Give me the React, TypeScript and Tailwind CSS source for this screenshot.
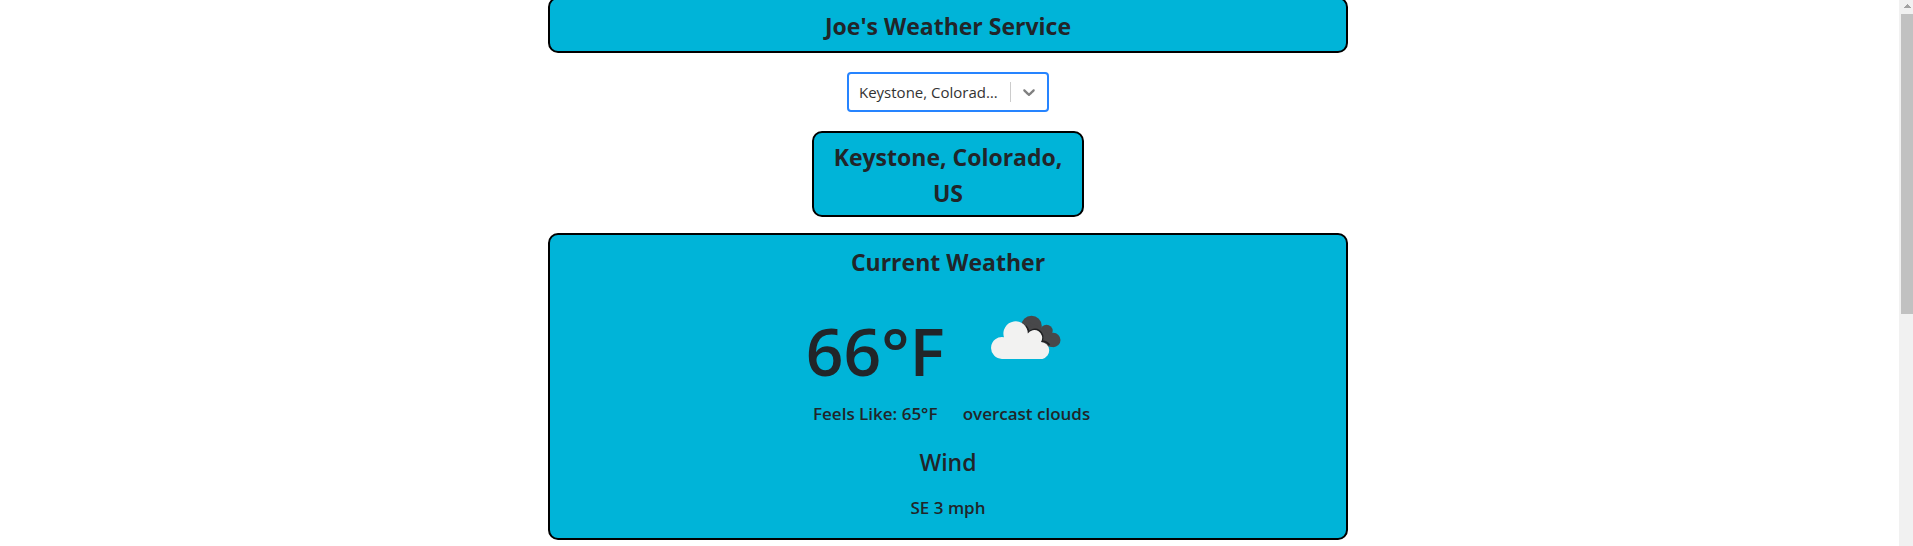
import React, { useState } from "react";

const LOCATIONS = ["Keystone, Colorado, US", "Denver, Colorado, US"];

function OvercastIcon() {
  return (
    <svg viewBox="0 0 100 100" className="block size-[100px]" role="img" aria-label="overcast clouds">
      <g fill="#48484a">
        <circle cx="55.5" cy="38" r="10.3" />
        <circle cx="70.5" cy="43" r="6.2" />
        <circle cx="77.3" cy="52" r="7.2" />
        <path d="M52 34 L66 40 L77 50 L77 59 L68 58 Z" />
      </g>
      <path
        d="M49.5 38 Q52.6 41 52.6 44.9 A7.5 7.5 0 0 1 65.4 53.2 Q70 53 73.5 56.8"
        fill="none"
        stroke="#202123"
        strokeWidth="1.8"
      />
      <path
        d="M26.4 70.9 A10.9 10.9 0 1 1 28 49.3 A12.2 12.2 0 1 1 51.8 45.6 A7.5 7.5 0 0 1 65 53.9 A8.6 8.6 0 0 1 66.4 70.9 Z"
        fill="#f2f2f1"
      />
    </svg>
  );
}

function Scrollbar() {
  return (
    <div aria-hidden="true" className="flex w-[14px] shrink-0 flex-col items-end bg-[#f1f1f1]">
      <svg viewBox="0 0 12 14" className="h-[14px] w-3" shapeRendering="crispEdges">
        <path d="M3 8 H10 L6.5 4 Z" fill="#a3a3a3" />
      </svg>
      <div className="h-[55%] w-3 bg-[#c1c1c1]" />
    </div>
  );
}

export default function App() {
  const [location, setLocation] = useState(LOCATIONS[0]);

  return (
    <div className="flex h-screen overflow-hidden bg-white font-['Open_Sans','Noto_Sans',sans-serif] text-[#212529]">
      <main className="-mt-[3px] flex min-w-0 flex-1 flex-col items-center pr-[3px] text-center">
        <header className="w-full max-w-[800px] shrink-0 rounded-[10px] border-2 border-black bg-[#00b4d8] px-2 pt-[9px] pb-[7px]">
          <h1 className="text-[23px] leading-9 font-bold">Joe's Weather Service</h1>
        </header>

        <div className="relative mt-[19px] w-[202px] shrink-0">
          <select
            aria-label="Location"
            value={location}
            onChange={(e) => setLocation(e.target.value)}
            className="block h-10 w-full appearance-none rounded border-2 border-[#2684ff] bg-white pr-[46px] pl-[10px] text-[15px] text-ellipsis text-[#333333] outline-none"
          >
            {LOCATIONS.map((name) => (
              <option key={name}>{name}</option>
            ))}
          </select>
          <span className="pointer-events-none absolute inset-y-[10px] right-[38px] w-px bg-[#cccccc]" />
          <svg
            viewBox="0 0 20 20"
            aria-hidden="true"
            className="pointer-events-none absolute top-[10px] right-[10px] size-5"
            fill="#808080"
          >
            <path d="M4.516 7.548c0.436-0.446 1.043-0.481 1.576 0l3.908 3.747 3.908-3.747c0.533-0.481 1.141-0.446 1.574 0 0.436 0.445 0.408 1.197 0 1.615-0.406 0.418-4.695 4.502-4.695 4.502-0.217 0.223-0.502 0.335-0.787 0.335s-0.57-0.112-0.789-0.335c0 0-4.287-4.084-4.695-4.502s-0.436-1.17 0-1.615z" />
          </svg>
        </div>

        <section className="mt-[19px] w-[272px] shrink-0 rounded-[10px] border-2 border-black bg-[#00b4d8] px-4 pt-[6px] pb-1">
          <h2 className="text-[23px] leading-9 font-bold">{location}</h2>
        </section>

        <section className="mt-4 w-full max-w-[800px] shrink-0 rounded-[10px] border-2 border-black bg-[#00b4d8] px-2 pt-[9px] pb-4">
          <h2 className="text-[23px] leading-9 font-bold">Current Weather</h2>
          <div className="mt-2 flex justify-center gap-[18px] text-[17px] leading-7 font-semibold">
            <div className="flex flex-col items-center">
              <p className="flex h-[112px] items-center pt-3 text-[66px] leading-none">66°F</p>
              <p>Feels Like: 65°F</p>
            </div>
            <div className="flex flex-col items-center">
              <div className="h-[112px]">
                <OvercastIcon />
              </div>
              <p>overcast clouds</p>
            </div>
          </div>
          <h3 className="mt-4 text-[23px] leading-9 font-semibold">Wind</h3>
          <p className="mt-[14px] text-[17px] leading-7 font-semibold">SE 3 mph</p>
        </section>
      </main>
      <Scrollbar />
    </div>
  );
}
